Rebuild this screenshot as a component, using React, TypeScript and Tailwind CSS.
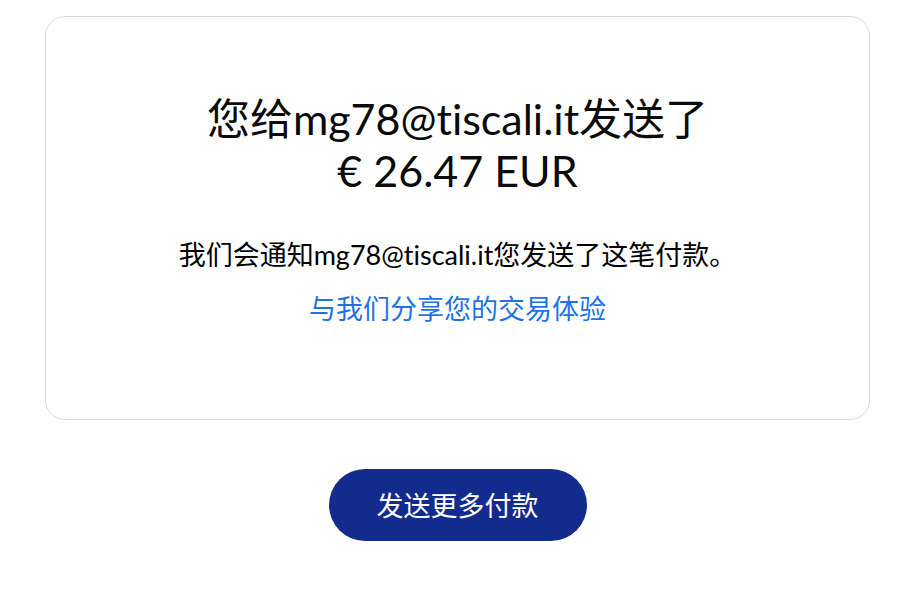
import React from "react";

export default function App() {
  const font = {
    fontFamily: 'Lato, "Noto Sans CJK SC", "Noto Sans", sans-serif',
  };
  return (
    <div className="min-h-[614px] w-full bg-white [font-variant-ligatures:none]" style={font}>
      <div className="pt-4 ml-[45px] w-[825px] flex flex-col items-center">
        <div className="w-full h-[404px] rounded-[20px] border border-[#dcd9d1] bg-white flex flex-col items-center pt-[76px]">
          <h1 className="text-[43px] leading-[52px] text-[#0b0b0b] font-normal text-center">
            您给mg78@tiscali.it发送了
            <br />€ 26.47 EUR
          </h1>
          <p className="mt-[41px] text-[27px] leading-[34px] text-black text-center">
            我们会通知mg78@tiscali.it您发送了这笔付款。
          </p>
          <a
            href="#"
            className="mt-[20px] text-[27px] leading-[34px] text-[#1d72e8] text-center"
          >
            与我们分享您的交易体验
          </a>
        </div>
        <button className="mt-[49px] w-[258px] h-[72px] rounded-full bg-[#142b8e] text-white text-[27px] leading-none flex items-center justify-center">
          发送更多付款
        </button>
      </div>
    </div>
  );
}
